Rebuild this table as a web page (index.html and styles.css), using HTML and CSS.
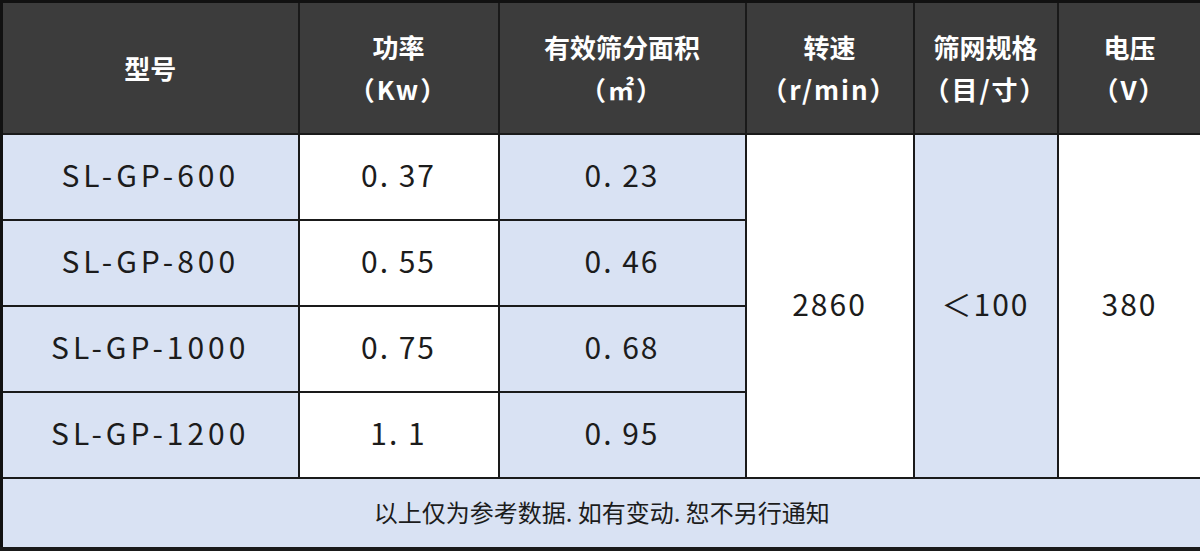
FILE: index.html
```html
<!DOCTYPE html>
<html lang="zh-CN">
<head>
<meta charset="utf-8">
<title>参数表</title>
<link rel="stylesheet" href="styles.css">
</head>
<body>
<table class="spec">
  <colgroup>
    <col class="c1"><col class="c2"><col class="c3"><col class="c4"><col class="c5"><col class="c6">
  </colgroup>
  <thead>
    <tr class="head">
      <th>型号</th>
      <th>功率<br><span class="unit">（Kw）</span></th>
      <th>有效筛分面积<br><span class="unit">（㎡）</span></th>
      <th>转速<br><span class="unit">（r/min）</span></th>
      <th>筛网规格<br><span class="unit">（目/寸）</span></th>
      <th>电压<br><span class="unit">（V）</span></th>
    </tr>
  </thead>
  <tbody>
    <tr class="row">
      <td class="blue model">SL-GP-600</td>
      <td>0. 37</td>
      <td class="blue">0. 23</td>
      <td rowspan="4" class="merged">2860</td>
      <td rowspan="4" class="blue merged">＜100</td>
      <td rowspan="4" class="merged">380</td>
    </tr>
    <tr class="row">
      <td class="blue model">SL-GP-800</td>
      <td>0. 55</td>
      <td class="blue">0. 46</td>
    </tr>
    <tr class="row">
      <td class="blue model">SL-GP-1000</td>
      <td>0. 75</td>
      <td class="blue">0. 68</td>
    </tr>
    <tr class="row">
      <td class="blue model">SL-GP-1200</td>
      <td>1. 1</td>
      <td class="blue">0. 95</td>
    </tr>
    <tr class="foot">
      <td colspan="6" class="blue">以上仅为参考数据. 如有变动. 恕不另行通知</td>
    </tr>
  </tbody>
</table>
</body>
</html>
```

FILE: styles.css
```css
html, body {
  margin: 0;
  padding: 0;
  background: #ffffff;
}

.spec {
  width: 1200px;
  table-layout: fixed;
  border-collapse: collapse;
  border: 3px solid #111111;
  border-right-width: 2px;
  font-family: "Noto Sans CJK SC", "Noto Sans", sans-serif;
  color: #1c1c1c;
}

.c1 { width: 297px; }
.c2 { width: 200px; }
.c3 { width: 247px; }
.c4 { width: 168px; }
.c5 { width: 144px; }
.c6 { width: 144px; }

.spec th,
.spec td {
  border: 2px solid #1a1a1a;
  text-align: center;
  vertical-align: middle;
  padding: 0;
}

.head th {
  background: #3c3c3c;
  color: #ffffff;
  font-weight: 700;
  font-size: 26px;
  line-height: 42px;
  height: 130px;
}

.unit {
  letter-spacing: 2px;
}

.row td {
  height: 78px;
  padding-bottom: 6px;
  font-size: 30px;
  font-weight: 400;
  letter-spacing: 2px;
  background: #ffffff;
}

.row td.model {
  letter-spacing: 4px;
}

.row td.merged {
  letter-spacing: 2px;
}

.spec td.blue {
  background: #d9e2f3;
}

.foot td {
  height: 64px;
  padding-bottom: 4px;
  font-size: 24px;
  border-bottom-width: 4px;
}
```
